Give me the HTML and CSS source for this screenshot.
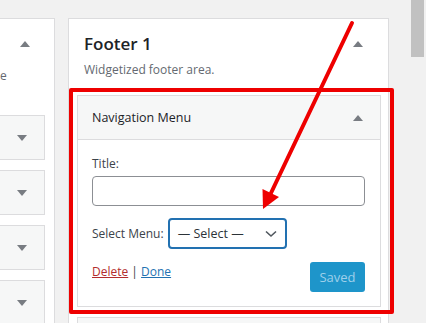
FILE: index.html
```html
<!DOCTYPE html>
<html lang="en">
<head>
  <meta charset="UTF-8">
  <title>Widgets</title>
  <link rel="stylesheet" href="styles.css">
</head>
<body>
  <div class="screen">
    <!-- Left sidebar (cut off) -->
    <div class="sidebar side-left">
      <div class="sidebar-head">
        <span class="arrow-up"></span>
      </div>
      <div class="sidebar-desc">e</div>
      <div class="mini-widget"><span class="arrow-down"></span></div>
      <div class="mini-widget"><span class="arrow-down"></span></div>
      <div class="mini-widget"><span class="arrow-down"></span></div>
      <div class="mini-widget"><span class="arrow-down"></span></div>
    </div>

    <!-- Footer 1 sidebar -->
    <div class="sidebar side-main">
      <div class="sidebar-head">
        <h2>Footer 1</h2>
        <span class="arrow-up"></span>
      </div>
      <p class="sidebar-desc">Widgetized footer area.</p>

      <div class="widget-list">
        <div class="widget">
          <div class="highlight"></div>
          <div class="widget-top">
            <h3>Navigation Menu</h3>
            <span class="arrow-up"></span>
          </div>
          <div class="widget-inside">
            <label class="field-label">Title:</label>
            <input type="text" class="text-input">
            <div class="menu-row">
              <span>Select Menu:</span>
              <div class="select-box">
                <span>— Select —</span>
                <svg width="12" height="8" viewBox="0 0 12 8"><path d="M1 1.5 L6 6 L11 1.5" fill="none" stroke="#50575e" stroke-width="1.6"/></svg>
              </div>
            </div>
            <div class="widget-actions">
              <div class="links"><a class="delete">Delete</a> | <a class="done">Done</a></div>
              <button class="saved">Saved</button>
            </div>
          </div>
        </div>
        <div class="widget next"></div>
      </div>
    </div>

    <div class="scrollbar"><div class="thumb"></div></div>

    <!-- Annotation arrow -->
    <svg class="annotation" width="426" height="323" viewBox="0 0 426 323">
      <line x1="352" y1="23" x2="271" y2="193" stroke="#ee0000" stroke-width="4" stroke-linecap="round"/>
      <polygon points="263,209 262.5,189 279,197" fill="#ee0000"/>
    </svg>
  </div>
</body>
</html>
```

FILE: styles.css
```css
/* General */
body {
  margin: 0;
  background: #f1f1f1;
  font-family: 'Open Sans', sans-serif;
  font-size: 12px;
  color: #3c434a;
  overflow: hidden;
}

.screen {
  position: relative;
  display: flex;
  align-items: flex-start;
  width: 426px;
  height: 323px;
  padding-top: 18px;
  box-sizing: border-box;
  overflow: hidden;
}

.sidebar {
  background: #fff;
  border: 1px solid #dcdcde;
  height: 400px;
}

/* Arrows */
.arrow-up, .arrow-down {
  width: 0;
  height: 0;
  border-left: 5px solid transparent;
  border-right: 5px solid transparent;
}

.arrow-up {
  border-bottom: 6px solid #787c82;
}

.arrow-down {
  border-top: 6px solid #787c82;
}

/* Left sidebar */
.side-left {
  width: 64px;
  margin-left: -11px;
  flex-shrink: 0;
}

.side-left .sidebar-head {
  display: flex;
  justify-content: flex-end;
  padding: 22px 24px 0 0;
  height: 24px;
}

.side-left .sidebar-desc {
  color: #646970;
  font-size: 12px;
  margin: 2px 0 0 10px;
  height: 48px;
}

.mini-widget {
  width: 55px;
  height: 45px;
  background: #f6f7f7;
  border: 1px solid #dcdcde;
  margin-bottom: 10px;
  display: flex;
  justify-content: flex-end;
  align-items: center;
  padding-right: 17px;
  box-sizing: border-box;
}

/* Main sidebar */
.side-main {
  width: 319px;
  margin-left: 13px;
  flex-shrink: 0;
}

.side-main .sidebar-head {
  display: flex;
  justify-content: space-between;
  align-items: center;
  padding: 13px 25px 0 15px;
}

.side-main h2 {
  margin: 0;
  font-size: 17px;
  font-weight: 600;
  color: #1d2327;
}

.side-main .sidebar-desc {
  margin: 6px 0 0 15px;
  font-size: 12px;
  color: #646970;
}

.widget-list {
  padding: 17px 7px 0 8px;
}

.widget {
  position: relative;
  border: 1px solid #dcdcde;
  background: #fff;
}

.widget.next {
  margin-top: 10px;
  height: 40px;
  background: #f6f7f7;
}

.highlight {
  position: absolute;
  top: -8px;
  left: -9px;
  right: -14px;
  bottom: -8px;
  border: 4px solid #ee0000;
  border-radius: 2px;
  pointer-events: none;
}

.widget-top {
  display: flex;
  justify-content: space-between;
  align-items: center;
  height: 43px;
  padding: 0 17px 0 14px;
  background: #f6f7f7;
  border-bottom: 1px solid #dcdcde;
}

.widget-top h3 {
  margin: 0;
  font-size: 12.5px;
  font-weight: 500;
  color: #1d2327;
}

.widget-inside {
  padding: 15px 15px 14px 14px;
}

.field-label {
  display: block;
  line-height: 18px;
}

.text-input {
  display: block;
  width: 100%;
  height: 30px;
  box-sizing: border-box;
  border: 1px solid #8c8f94;
  border-radius: 4px;
  margin-top: 3px;
}

.menu-row {
  display: flex;
  align-items: center;
  gap: 4px;
  margin-top: 12px;
}

.select-box {
  display: flex;
  justify-content: space-between;
  align-items: center;
  width: 119px;
  height: 31px;
  box-sizing: border-box;
  border: 2px solid #2271b1;
  border-radius: 4px;
  padding: 0 8px 0 8px;
  color: #2c3338;
  font-size: 12.5px;
}

.widget-actions {
  display: flex;
  justify-content: space-between;
  align-items: flex-start;
  margin-top: 13px;
}

.links {
  line-height: 18px;
  margin-top: 1px;
}

.links a {
  text-decoration: underline;
}

.delete {
  color: #b32d2e;
}

.done {
  color: #2271b1;
}

.saved {
  width: 55px;
  height: 30px;
  border: none;
  border-radius: 3px;
  background: #1e95ca;
  color: #9fd0ea;
  font-family: 'Open Sans', sans-serif;
  font-size: 13px;
  padding: 0;
}

/* Scrollbar */
.scrollbar {
  position: absolute;
  top: 0;
  right: 2px;
  width: 13px;
  height: 100%;
}

.scrollbar .thumb {
  height: 57px;
  background: #c1c1c1;
}

.annotation {
  position: absolute;
  top: 0;
  left: 0;
}
```
